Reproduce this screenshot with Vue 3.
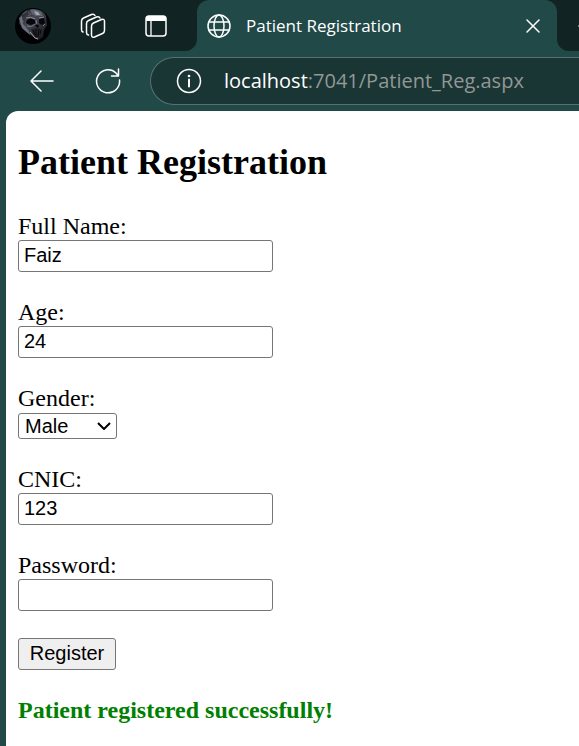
<script setup>
import { ref } from 'vue'

const fullName = ref('Faiz')
const age = ref('24')
const gender = ref('Male')
const cnic = ref('123')
const password = ref('')
</script>

<template>
  <div class="browser">
    <header class="tab-strip">
      <div class="strip-tools">
        <button class="icon-button" type="button" aria-label="Profile">
          <svg width="36" height="36" viewBox="0 0 36 36">
            <defs>
              <clipPath id="avatar-clip"><circle cx="18" cy="18" r="18" /></clipPath>
              <linearGradient id="skull-shade" x1="0" y1="0" x2="1" y2="1">
                <stop offset="0" stop-color="#1a1b22" />
                <stop offset="0.4" stop-color="#464953" />
                <stop offset="1" stop-color="#111217" />
              </linearGradient>
            </defs>
            <g clip-path="url(#avatar-clip)">
              <rect width="36" height="36" fill="#020204" />
              <path d="M5 8Q9 1 18 1Q28 1 31 8L32 17L29 22L28 29L23 32L17 28L9 22L4 15Z" fill="url(#skull-shade)" />
              <path d="M15 2Q20 0 26 4L28 8L21 8L17 6Z" fill="#62656f" />
              <path d="M19 3L23 4L25 7L21 7Z" fill="#a0a4ae" />
              <path d="M4 10L7 8L8 16L14 23L15 27L7 20Z" fill="#6c707b" />
              <path d="M12 12Q16 9 20 12L20 16L15 17L11 15Z" fill="#06070a" />
              <path d="M24 11L29 10L30 15L27 17L24 15Z" fill="#06070a" />
              <path d="M11 10Q16 8 20 11M24 10L29 9" stroke="#8d9099" fill="none" />
              <path d="M12 18Q17 20 20 16M21 12L22 17M28 18L30 16" stroke="#777a84" fill="none" />
              <path d="M20 18L22 16L24 18L23 20Z" fill="#050507" />
              <path d="M16 21L21 20L27 21L26 27L23 30L18 27Z" fill="#24252c" />
              <path d="M18 22L20 27M21 21L21 29M24 21L23 29M26 22L25 26" stroke="#050507" />
              <path d="M15 24L20 30L23 31" stroke="#a5a4aa" stroke-width="1" fill="none" />
              <path d="M8 6L12 3M13 4L16 6L13 8M7 12L9 14" stroke="#5b5e68" fill="none" />
            </g>
          </svg>
        </button>
        <button class="icon-button" type="button" aria-label="Workspaces">
          <svg width="26" height="26" viewBox="0 0 26 26" class="line-icon">
            <path d="M3 19Q1.5 18.5 1.5 16.5V8Q1.5 6 3.5 5L11.5 1.5Q14 0.5 15 2.5" />
            <path d="M8.5 22Q6.5 21.5 6.5 19.5V10.5Q6.5 8.5 8.5 7.5L16.5 4Q19 3 20 5" />
            <path d="M11.5 13Q11.5 11 13.5 10L21.5 6.5Q24.5 5.5 24.5 8.5V17.5Q24.5 19.5 22.5 20.5L14.5 24Q11.5 25 11.5 22Z" />
          </svg>
        </button>
        <button class="icon-button" type="button" aria-label="Tab actions">
          <svg width="22" height="22" viewBox="0 0 22 22">
            <rect x="1" y="1" width="20" height="20" rx="3" fill="none" stroke="#fff" stroke-width="1.5" />
            <path d="M1 4Q1 1 4 1H18Q21 1 21 4V6H1Z" fill="#fff" />
            <path d="M6 6V21" stroke="#fff" stroke-width="1.3" />
          </svg>
        </button>
      </div>
      <div class="tab">
        <svg width="24" height="24" viewBox="0 0 24 24" class="line-icon">
          <circle cx="12" cy="12" r="11" />
          <ellipse cx="12" cy="12" rx="5" ry="11" />
          <path d="M2 8H22M2 16H22" />
        </svg>
        <span class="tab-title">Patient Registration</span>
        <button class="icon-button" type="button" aria-label="Close tab">
          <svg width="14" height="14" viewBox="0 0 14 14" class="line-icon"><path d="M1 1L13 13M13 1L1 13" /></svg>
        </button>
      </div>
      <div class="strip-end">
        <button class="icon-button" type="button" aria-label="New tab">
          <svg width="14" height="14" viewBox="0 0 14 14" class="line-icon"><path d="M2 7H12M7 2V12" /></svg>
        </button>
      </div>
    </header>

    <nav class="toolbar" aria-label="Navigation">
      <button class="icon-button" type="button" aria-label="Back">
        <svg width="24" height="22" viewBox="0 0 24 22" class="line-icon"><path d="M11 1L1 11L11 21M1 11H23" /></svg>
      </button>
      <button class="icon-button" type="button" aria-label="Reload">
        <svg width="26" height="26" viewBox="0 0 26 26" class="line-icon">
          <path d="M24.5 12A11.5 11.5 0 1 1 21 5L23.5 8M23.5 1V8H16.5" />
        </svg>
      </button>
      <div class="address">
        <svg width="26" height="26" viewBox="0 0 26 26" class="line-icon">
          <circle cx="13" cy="13" r="11.5" />
          <path d="M13 11.5V18.5" stroke-width="2" />
          <circle cx="13" cy="8" r="1.3" fill="#fff" stroke="none" />
        </svg>
        <a class="url" href="#"><span class="host">localhost</span>:7041/Patient_Reg.aspx</a>
      </div>
    </nav>

    <main class="page">
      <h1>Patient Registration</h1>
      <form class="form" @submit.prevent>
        <div class="field">
          <label for="full-name">Full Name:</label>
          <input id="full-name" v-model="fullName" type="text" />
        </div>
        <div class="field">
          <label for="age">Age:</label>
          <input id="age" v-model="age" type="text" />
        </div>
        <div class="field">
          <label for="gender">Gender:</label>
          <div class="select-box">
            <select id="gender" v-model="gender">
              <option>Male</option>
              <option>Female</option>
            </select>
            <svg width="14" height="8" viewBox="0 0 14 8" class="chevron"><path d="M1 1L7 7L13 1" /></svg>
          </div>
        </div>
        <div class="field">
          <label for="cnic">CNIC:</label>
          <input id="cnic" v-model="cnic" type="text" />
        </div>
        <div class="field">
          <label for="password">Password:</label>
          <input id="password" v-model="password" type="password" />
        </div>
        <button class="register" type="submit">Register</button>
        <output class="message">Patient registered successfully!</output>
      </form>
    </main>
  </div>
</template>

<style>
body {
  margin: 0;
}
</style>

<style scoped>
* {
  box-sizing: border-box;
}
.browser {
  display: flex;
  flex-direction: column;
  min-height: 100vh;
  overflow: hidden;
  background: #204948;
  font-family: "Open Sans", sans-serif;
}
svg {
  display: block;
  flex: none;
}
.icon-button {
  display: flex;
  flex: none;
  padding: 0;
  border: 0;
  background: transparent;
}
.line-icon {
  fill: none;
  stroke: #fff;
  stroke-width: 1.5;
  stroke-linecap: round;
  stroke-linejoin: round;
}
.tab-strip {
  display: flex;
  height: 51px;
  background: linear-gradient(#112322 50%, #204948 50%);
}
.strip-tools {
  display: flex;
  flex: none;
  align-items: center;
  gap: 29px;
  width: 197px;
  padding-left: 15px;
  background: #112322;
  border-bottom-right-radius: 12px;
}
.strip-tools .icon-button:last-child {
  margin-left: 10px;
}
.tab {
  display: flex;
  flex: 1;
  align-items: center;
  min-width: 0;
  padding: 0 17px 0 10px;
  background: #204948;
  border-radius: 12px 12px 0 0;
}
.tab-title {
  flex: 1;
  padding-left: 15px;
  overflow: hidden;
  color: #fff;
  font-size: 17px;
  line-height: 24px;
  white-space: nowrap;
}
.strip-end {
  display: flex;
  flex: none;
  align-items: center;
  width: 22px;
  padding-left: 20px;
  overflow: hidden;
  background: #112322;
  border-bottom-left-radius: 12px;
}
.toolbar {
  display: flex;
  align-items: center;
  height: 60px;
  padding-left: 30px;
}
.toolbar .icon-button + .icon-button {
  margin-left: 41px;
}
.address {
  display: flex;
  flex: 1;
  align-items: center;
  gap: 22px;
  height: 48px;
  margin-left: 29px;
  padding-left: 25px;
  background: #193534;
  border: 1px solid #587170;
  border-right: 0;
  border-radius: 24px 0 0 24px;
}
.url {
  color: #929894;
  font-size: 20px;
  line-height: 28px;
  text-decoration: none;
  white-space: nowrap;
}
.host {
  color: #fff;
}
.page {
  flex: 1;
  margin-left: 6px;
  padding: 31px 12px 20px;
  background: #fff;
  border-top-left-radius: 12px;
  color: #000;
  font-family: "Liberation Serif", serif;
  font-size: 24px;
  line-height: 27px;
}
h1 {
  margin: 0 0 30px;
  font-size: 36px;
  line-height: 41px;
}
.form {
  display: flex;
  flex-direction: column;
  align-items: flex-start;
  gap: 27px;
}
.field {
  display: flex;
  flex-direction: column;
  align-items: flex-start;
}
input,
select,
.register {
  border: 1px solid #767676;
  border-radius: 3px;
  color: #000;
  font-family: "Liberation Sans", sans-serif;
  font-size: 20px;
}
input {
  width: 255px;
  height: 32px;
  padding: 0 5px 2px;
  background: #fff;
}
.select-box {
  display: grid;
  align-items: center;
  padding-top: 1px;
}
select {
  grid-area: 1 / 1;
  width: 99px;
  height: 26px;
  padding: 0 6px;
  appearance: none;
  background: #fff;
}
.chevron {
  grid-area: 1 / 1;
  justify-self: end;
  margin-right: 6px;
  fill: none;
  stroke: #000;
  stroke-width: 2;
  pointer-events: none;
}
.register {
  width: 98px;
  height: 32px;
  padding: 0 0 2px;
  background: #efefef;
}
.message {
  color: #008000;
  font-weight: bold;
}
</style>
